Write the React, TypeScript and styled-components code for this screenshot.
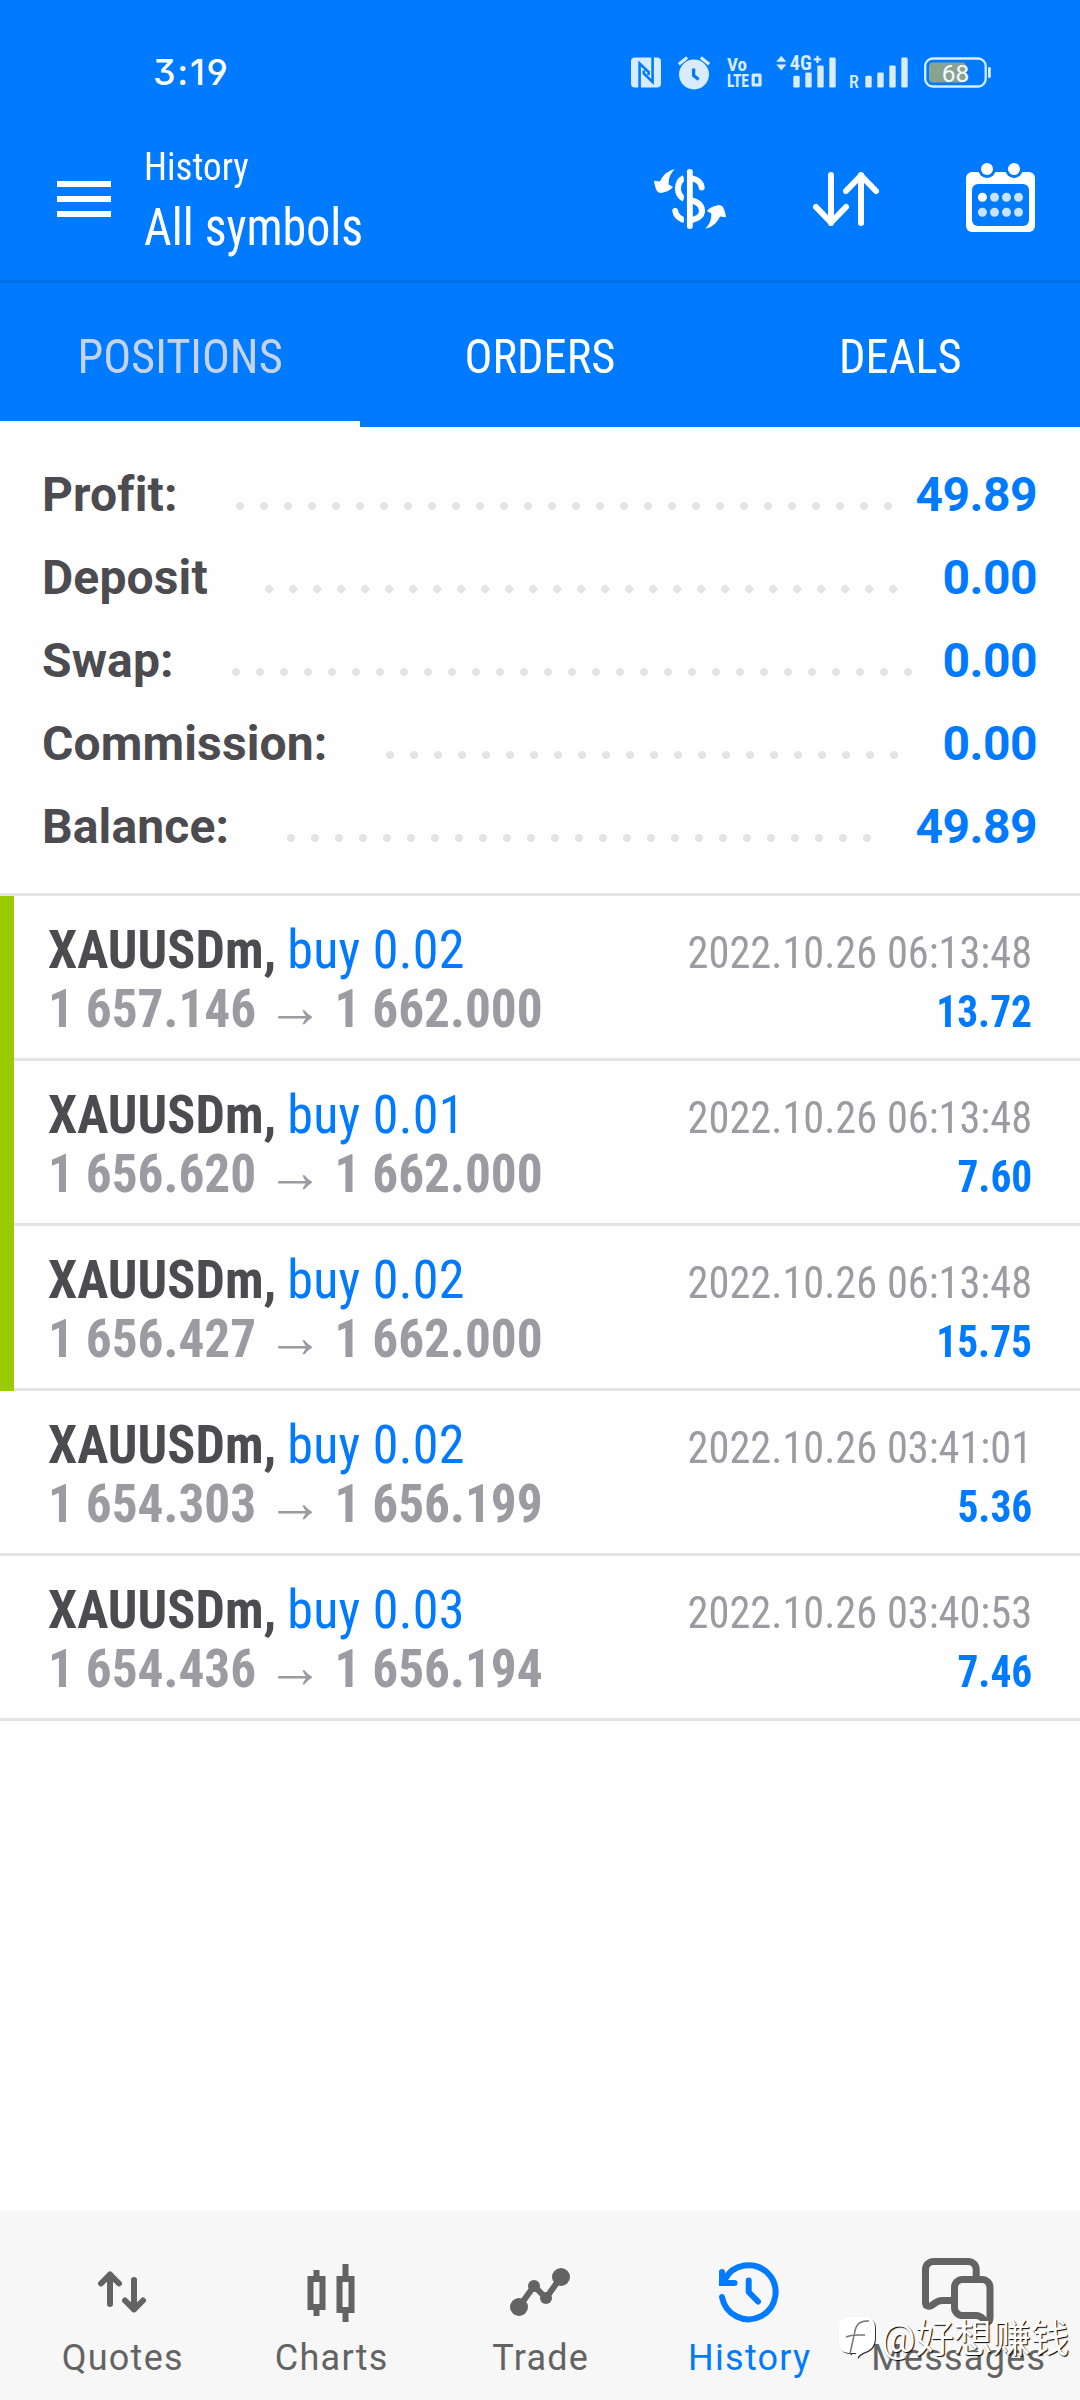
import React from "react";
import styled, { createGlobalStyle } from "styled-components";

const blue = "#007aff";
const condensed = `"Roboto Condensed", Roboto, "Liberation Sans", sans-serif`;

const GlobalStyle = createGlobalStyle`
  body {
    margin: 0;
    background: #fff;
    font-family: Roboto, "Liberation Sans", sans-serif;
  }
`;

const Screen = styled.div`
  position: relative;
  display: flex;
  flex-direction: column;
  width: 1080px;
  height: 2400px;
  overflow: hidden;
  background: #fefefe;
`;

const StatusBar = styled.div`
  display: flex;
  align-items: flex-start;
  justify-content: space-between;
  box-sizing: border-box;
  height: 118px;
  padding: 27px 89px 0 153px;
  background: ${blue};
`;

const Clock = styled.time`
  color: #fff;
  font-family: Inter, Roboto, sans-serif;
  font-size: 36px;
  font-weight: 500;
  font-feature-settings: "cv09", "cv04";
  letter-spacing: 1.7px;
  line-height: 91px;
`;

const StatusIcons = styled.div`
  display: flex;
  align-items: center;
  height: 91px;
`;

const StatusIcon = styled.svg<{ $gap?: number }>`
  display: block;
  flex: none;
  height: 36px;
  margin-left: ${(p) => p.$gap ?? 0}px;
  overflow: visible;
  fill: #d9ecff;
  font-family: ${condensed};
  font-weight: 700;
`;

const Toolbar = styled.header`
  display: flex;
  align-items: center;
  box-sizing: border-box;
  height: 165px;
  padding: 0 45px 0 57px;
  background: ${blue};
  border-bottom: 3px solid #006fe8;
`;

const MenuButton = styled.div`
  display: flex;
  flex-direction: column;
  gap: 9px;
  width: 54px;
`;

const MenuBar = styled.span`
  height: 6px;
  background: #fff;
`;

const Heading = styled.div`
  flex: 1;
  margin-left: 33px;
  padding-top: 7px;
  color: #fff;
  font-family: ${condensed};
`;

const Caption = styled.div`
  font-size: 39px;
  line-height: 50px;
  transform: scaleX(0.951);
  transform-origin: left;
`;

const Title = styled.div`
  font-size: 51px;
  line-height: 72px;
  transform: scaleX(0.94);
  transform-origin: left;
`;

const Actions = styled.div`
  display: flex;
  gap: 87px;
`;

const ActionIcon = styled.svg`
  display: block;
  height: 72px;
  overflow: visible;
  fill: none;
  stroke: #fff;
  stroke-width: 6;
  stroke-linecap: round;
  stroke-linejoin: round;
`;

const Tabs = styled.nav`
  display: grid;
  grid-template-columns: repeat(3, 1fr);
  height: 144px;
  background: ${blue};
`;

const Tab = styled.div<{ $active?: boolean }>`
  box-sizing: border-box;
  height: 144px;
  padding-top: 2px;
  text-align: center;
  color: ${(p) => (p.$active ? "#c6d2e6" : "#fff")};
  font-family: ${condensed};
  font-size: 48px;
  line-height: 144px;
  box-shadow: ${(p) => (p.$active ? "inset 0 -6px #fff" : "none")};
`;

const TabLabel = styled.span`
  display: inline-block;
  transform: scaleX(0.968);
`;

const Summary = styled.section`
  padding: 26px 43px 25px 42px;
  border-bottom: 3px solid #e4e4e4;
`;

const SummaryRow = styled.div`
  display: flex;
  height: 83px;
  font-size: 48px;
  font-weight: 700;
  line-height: 83px;
`;

const SummaryLabel = styled.span<{ $width: number }>`
  flex: none;
  width: ${(p) => p.$width}px;
  color: #4c4b50;
  letter-spacing: 0.15px;
  white-space: nowrap;
`;

const Leader = styled.span<{ $dots: number }>`
  flex: none;
  width: ${(p) => p.$dots * 24}px;
  height: 8px;
  margin-top: 49px;
  background: radial-gradient(circle at 4px 4px, #e4e4e4 3.7px, transparent 4.3px) 0 0 / 24px 8px repeat-x;
`;

const SummaryValue = styled.span`
  margin-left: auto;
  color: ${blue};
  letter-spacing: -0.5px;
`;

const DealRow = styled.article<{ $marked: boolean }>`
  display: flex;
  height: 165px;
  background: linear-gradient(#e4e4e4, #e4e4e4) 0 100% / 100% 3px no-repeat;
  &::before {
    content: "";
    width: 14px;
    background: ${(p) => (p.$marked ? "#9c0" : "transparent")};
  }
`;

const DealBody = styled.div`
  flex: 1;
  padding: 24px 47.5px 0 34.3px;
  font-family: ${condensed};
`;

const Line = styled.div`
  display: flex;
  align-items: baseline;
  justify-content: space-between;
  height: 59px;
  line-height: 59px;
  white-space: pre;
`;

const LineStart = styled.div<{ $scale: number }>`
  display: flex;
  align-items: baseline;
  font-size: 54px;
  transform: scaleX(${(p) => p.$scale});
  transform-origin: left;
`;

const Symbol = styled.span`
  color: #4c4b50;
  font-weight: 700;
`;

const Side = styled.span`
  margin-left: 11.3px;
  color: ${blue};
  letter-spacing: 0.25px;
`;

const Price = styled.span`
  color: #9b9ba1;
  font-weight: 700;
`;

const Arrow = styled.span`
  margin: 0 11.4px 0 11px;
  color: #9b9ba1;
  font-family: Roboto, "Liberation Sans", sans-serif;
  font-size: 60px;
  line-height: 40px;
`;

const Time = styled.span`
  color: #9b9ba1;
  font-size: 45px;
  line-height: 45px;
  transform: scaleX(0.941);
  transform-origin: right;
`;

const Profit = styled.span`
  color: ${blue};
  font-size: 45px;
  font-weight: 700;
  line-height: 45px;
  transform: scaleX(0.921);
  transform-origin: right;
`;

const NavBar = styled.nav`
  display: grid;
  grid-template-columns: repeat(5, 209px);
  justify-content: center;
  box-sizing: border-box;
  height: 189px;
  margin-top: auto;
  padding-top: 45px;
  background: #f7f7f7;
  box-shadow: 0 0 3px #f7f7f7;
`;

const NavItem = styled.div<{ $active?: boolean }>`
  display: flex;
  flex-direction: column;
  align-items: center;
  gap: 9px;
  color: ${(p) => (p.$active ? blue : "#636363")};
  font-size: 36px;
  line-height: 42px;
  letter-spacing: 1.25px;
  text-indent: 1.5px;
`;

const NavIcon = styled.svg`
  display: block;
  width: 84px;
  height: 72px;
  fill: none;
  stroke: currentColor;
  stroke-width: 6;
`;

const Watermark = styled.div`
  position: absolute;
  left: 838px;
  bottom: 34px;
  display: flex;
  align-items: center;
  gap: 5px;
  color: #fff;
  font-family: Roboto, "Noto Sans CJK SC", sans-serif;
  font-size: 38.4px;
  line-height: 54px;
  white-space: nowrap;
  text-shadow: 1px 1px 1px #000;
`;

const WatermarkLogo = styled.svg`
  display: block;
  width: 38px;
  height: 46px;
  overflow: visible;
  filter: drop-shadow(1px 1px 0.5px rgba(0, 0, 0, 0.8));
`;

const barTops = [20.8, 17.5, 10.5, 2.5];

const SignalBars = ({ x }: { x: number }) => (
  <>
    {barTops.map((top, i) => (
      <rect key={top} x={x + i * 12} y={top} width="6.4" height={32.5 - top} rx="1.3" />
    ))}
  </>
);

const StatusArea = () => (
  <StatusIcons>
    <StatusIcon width="30" viewBox="0 0 30 36">
      <rect y="2.5" width="30" height="30" rx="4" />
      <path d="M8.6 33V8.5L17.6 17v3M21.6 2v25L12.8 18.5v-3" fill="none" stroke={blue} strokeWidth="2.6" />
    </StatusIcon>
    <StatusIcon $gap={17} width="32" viewBox="0 0 32 36">
      <circle cx="16" cy="19.5" r="15" />
      <path d="M.8 9.3 9.2 2.4M22.8 2.4l8.4 6.9" stroke="#d9ecff" strokeWidth="3.2" />
      <path d="M15.6 13.5v7l5 4" fill="none" stroke={blue} strokeWidth="3.3" />
    </StatusIcon>
    <StatusIcon $gap={17} width="35" viewBox="0 0 35 36">
      <text x="0" y="16.2" fontSize="19" textLength="20">Vo</text>
      <text x="0" y="31.5" fontSize="18.500" textLength="22" lengthAdjust="spacingAndGlyphs">LTE</text>
      <path d="M26.200 20.200h6.800v9.800h-6.800z" fill="none" stroke="#d9ecff" strokeWidth="3.200" strokeLinejoin="round" />
    </StatusIcon>
    <StatusIcon $gap={14} width="60" viewBox="0 0 60 36">
      <path d="M.3 6.8h10L5.3.8zM.3 9.5h10l-5 6z" />
      <text x="13.8" y="15" fontSize="21" textLength="22" lengthAdjust="spacingAndGlyphs">4G</text>
      <path d="M41.5.7v7.4M37.8 4.4h7.4" stroke="#d9ecff" strokeWidth="2.2" />
      <SignalBars x={17.3} />
    </StatusIcon>
    <StatusIcon $gap={13} width="59" viewBox="0 0 59 36">
      <text x="0" y="33" fontSize="18" fontWeight="500">R</text>
      <SignalBars x={16.3} />
    </StatusIcon>
    <StatusIcon $gap={16} width="67" viewBox="0 0 67 36">
      <rect x="1.2" y="3.5" width="60.5" height="28" rx="7.5" fill="none" stroke="#d9ecff" strokeWidth="2.3" />
      <rect x="5" y="7.5" width="37" height="20" rx="4" fill="#89a38e" />
      <rect x="64" y="12" width="2.8" height="11" rx="1.2" />
      <text x="17.8" y="26.5" fontSize="24.5" fontWeight="400" fontFamily="Roboto" fill="#f4faff">68</text>
    </StatusIcon>
  </StatusIcons>
);

const curvedArrow =
  "M0 17.7 6 18.5C9 12 14 7.500 20.700 6.300 16.500 10.500 14.500 15 14.700 21.500L19 24C17 27 12 29 7.500 30 5 30 4 29 3 28 1.500 25 .3 21 0 17.700Z";

const CurrencyIcon = () => (
  <ActionIcon width="72" viewBox="0 0 72 72">
    <path d="M35.800 9v54" />
    <path d="M38 15.500C43 16 47 19.500 47.700 24.500M21.300 48C21.800 52 25 55 28.500 56.500" />
    <path
      d="M30 15C26 17 24 21 24 25.500 24 30 26.500 34 30 36M36 37C43 38.500 48 42 48 48 48 53 43 56 38 57"
      strokeLinecap="butt"
    />
    <path d="M31.300 9v54" stroke={blue} strokeWidth="3" strokeLinecap="butt" />
    <path d={curvedArrow} fill="#fff" stroke="none" />
    <path d={curvedArrow} fill="#fff" stroke="none" transform="rotate(180 36 36)" />
  </ActionIcon>
);

const SortIcon = () => (
  <ActionIcon width="66" viewBox="0 0 66 72">
    <path d="M18 12v48M3 44l15 15.500L33 44M48 60V12M33 28 48 12.500 63 28" />
  </ActionIcon>
);

const CalendarIcon = () => (
  <ActionIcon width="69" viewBox="0 0 69 72">
    <g stroke="none" fill="#fff">
      <rect y="9" width="69" height="60" rx="6" />
      <rect x="6" y="21" width="57" height="42" rx="6" fill={blue} />
      {[21, 48].map((x) => (
        <React.Fragment key={x}>
          <circle cx={x} cy="6" r="9" fill={blue} />
          <circle cx={x} cy="6" r="6" />
        </React.Fragment>
      ))}
      {[34.3, 49.3].map((y) =>
        [16.4, 28.5, 40.5, 52.5].map((x) => (
          <circle key={`${x}-${y}`} cx={x} cy={y} r="4.5" fill={x < 20 && y < 40 ? "#fff" : "#c8e2ff"} />
        ))
      )}
    </g>
  </ActionIcon>
);

const QuotesIcon = () => (
  <NavIcon viewBox="0 0 84 72" strokeLinecap="round" strokeLinejoin="round">
    <path d="M30 48V18.500M21 27.500 30 18.500 39 27.500M54 24v29.500M45 44.500 54 53.500 63 44.500" />
  </NavIcon>
);

const ChartsIcon = () => (
  <NavIcon viewBox="0 0 84 72">
    <path d="M21.500 23h12v28h-12zM27.500 14v6M27.500 54v6M50.500 23h12v31h-12zM56.500 8v12M56.500 57v9" />
  </NavIcon>
);

const TradeIcon = () => (
  <NavIcon viewBox="0 0 84 72">
    <path d="M21 51 36 30 48 42 63 21" />
    <g fill="currentColor" stroke="none">
      <circle cx="21" cy="51" r="9" />
      <circle cx="36" cy="30" r="6" />
      <circle cx="48" cy="42" r="6" />
      <circle cx="63" cy="21" r="9" />
    </g>
  </NavIcon>
);

const HistoryIcon = () => (
  <NavIcon viewBox="0 0 84 72" strokeLinecap="round" strokeLinejoin="round">
    <path d="M15 41A27 27 0 1 0 17.500 24" />
    <path d="M15 16v11h12.500M15 27 20 20" strokeLinejoin="miter" />
    <path d="M41.700 24.500V36L51 45.500" />
  </NavIcon>
);

const MessagesIcon = () => (
  <NavIcon viewBox="0 0 84 72">
    <g strokeWidth="7">
      <path d="M60.200 20v-6.500a8 8 0 0 0-8-8H17.500a8 8 0 0 0-8 8V47C9.500 50.500 14 51.500 17 48.500 20 46 22 44.500 26 44.500H36" />
      <path d="M74 62V31.500a8 8 0 0 0-8-8H46.500a8 8 0 0 0-8 8v20a8 8 0 0 0 8 8H60C65 59.500 66 62 68 64 71 67.500 74 66 74 62Z" />
    </g>
  </NavIcon>
);

const summary = [
  { label: "Profit:", width: 194, dots: 28, value: "49.89" },
  { label: "Deposit", width: 223.3, dots: 27, value: "0.00" },
  { label: "Swap:", width: 190.2, dots: 29, value: "0.00" },
  { label: "Commission:", width: 344.2, dots: 22, value: "0.00" },
  { label: "Balance:", width: 245.3, dots: 25, value: "49.89" },
];

const deals = [
  { volume: "0.02", open: "1 657.146", close: "1 662.000", time: "2022.10.26 06:13:48", profit: "13.72", marked: true },
  { volume: "0.01", open: "1 656.620", close: "1 662.000", time: "2022.10.26 06:13:48", profit: "7.60", marked: true },
  { volume: "0.02", open: "1 656.427", close: "1 662.000", time: "2022.10.26 06:13:48", profit: "15.75", marked: true },
  { volume: "0.02", open: "1 654.303", close: "1 656.199", time: "2022.10.26 03:41:01", profit: "5.36", marked: false },
  { volume: "0.03", open: "1 654.436", close: "1 656.194", time: "2022.10.26 03:40:53", profit: "7.46", marked: false },
];

const navItems = [
  { label: "Quotes", Icon: QuotesIcon },
  { label: "Charts", Icon: ChartsIcon },
  { label: "Trade", Icon: TradeIcon },
  { label: "History", Icon: HistoryIcon },
  { label: "Messages", Icon: MessagesIcon },
];

export default function App() {
  return (
    <Screen>
      <GlobalStyle />
      <StatusBar>
        <Clock>3:19</Clock>
        <StatusArea />
      </StatusBar>
      <Toolbar>
        <MenuButton>
          <MenuBar />
          <MenuBar />
          <MenuBar />
        </MenuButton>
        <Heading>
          <Caption>History</Caption>
          <Title>All symbols</Title>
        </Heading>
        <Actions>
          <CurrencyIcon />
          <SortIcon />
          <CalendarIcon />
        </Actions>
      </Toolbar>
      <Tabs>
        <Tab $active>
          <TabLabel>POSITIONS</TabLabel>
        </Tab>
        <Tab>
          <TabLabel>ORDERS</TabLabel>
        </Tab>
        <Tab>
          <TabLabel>DEALS</TabLabel>
        </Tab>
      </Tabs>
      <Summary>
        {summary.map((row) => (
          <SummaryRow key={row.label}>
            <SummaryLabel $width={row.width}>{row.label}</SummaryLabel>
            <Leader $dots={row.dots} />
            <SummaryValue>{row.value}</SummaryValue>
          </SummaryRow>
        ))}
      </Summary>
      {deals.map((deal) => (
        <DealRow key={deal.open} $marked={deal.marked}>
          <DealBody>
            <Line>
              <LineStart $scale={0.965}>
                <Symbol>XAUUSDm,</Symbol>
                <Side>buy {deal.volume}</Side>
              </LineStart>
              <Time>{deal.time}</Time>
            </Line>
            <Line>
              <LineStart $scale={0.95}>
                <Price>{deal.open}</Price>
                <Arrow>→</Arrow>
                <Price>{deal.close}</Price>
              </LineStart>
              <Profit>{deal.profit}</Profit>
            </Line>
          </DealBody>
        </DealRow>
      ))}
      <NavBar>
        {navItems.map(({ label, Icon }) => (
          <NavItem key={label} $active={label === "History"}>
            <Icon />
            {label}
          </NavItem>
        ))}
      </NavBar>
      <Watermark>
        <WatermarkLogo viewBox="0 0 38 46">
          <path d="M12 1h15c7 0 10 4 10 11v9c0 9-4 13-10 15-3 1-6 3-8 6l-1-5h-6C4 37 1 33 1 27V12C1 5 5 1 12 1Z" fill="#fff" />
          <path d="M31 5c-10-1-13 4-14.500 12L12 38M8 21c6-3 12-2 19-2" fill="none" stroke="#777" strokeWidth="1.500" />
        </WatermarkLogo>
        @好想赚钱
      </Watermark>
    </Screen>
  );
}
